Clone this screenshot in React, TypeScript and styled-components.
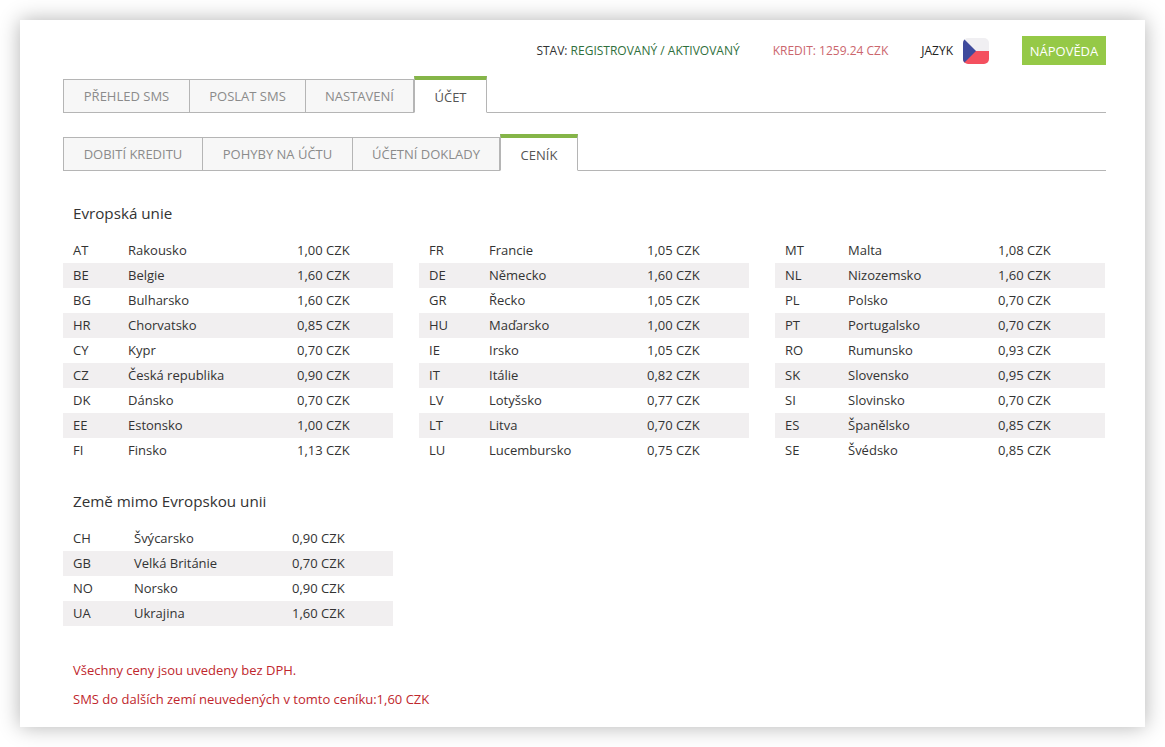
import React, { FunctionComponent } from 'react';
import styled, { createGlobalStyle } from 'styled-components';

const GlobalStyle = createGlobalStyle`
    html, body {
        margin: 0;
        padding: 0;
        background: #fff;
    }

    body {
        font-family: "Open Sans", "Liberation Sans", sans-serif;
        font-size: 13px;
        color: #333;
    }
`;

const Page = styled.div`
    padding: 20px 20px 20px;
    width: 1125px;
    box-sizing: content-box;
`;

const Card = styled.div`
    height: 707px;
    box-sizing: border-box;
    padding: 16px 39px 0 43px;
    background: #fff;
    box-shadow: 0 0 20px rgba(0, 0, 0, 0.3);
`;

const TopBar = styled.div`
    display: flex;
    justify-content: flex-end;
    align-items: center;
    height: 29px;
    font-size: 12px;
`;

const Status = styled.span`
    color: #333;
    margin-right: 33px;
`;

const Green = styled.span`
    color: #2f6f3c;
`;

const Credit = styled.span`
    color: #cb666d;
    margin-right: 33px;
`;

const Lang = styled.span`
    color: #222;
    margin-right: 10px;
`;

const Flag = styled.svg`
    display: block;
    width: 26px;
    height: 26px;
    margin-right: 33px;
`;

const HelpButton = styled.a`
    display: flex;
    align-items: center;
    justify-content: center;
    width: 84px;
    height: 29px;
    background: #95c947;
    color: #fff;
    font-size: 13px;
`;

const TabBar = styled.div<{ $top: number }>`
    display: flex;
    align-items: flex-end;
    height: 37px;
    margin-top: ${p => p.$top}px;
    border-bottom: 1px solid #b5b5b5;
    box-sizing: content-box;
`;

const Tab = styled.div<{ $active?: boolean; $width: number }>`
    display: flex;
    align-items: center;
    justify-content: center;
    box-sizing: border-box;
    width: ${p => p.$width}px;
    margin-bottom: -1px;
    padding-top: ${p => (p.$active ? 1 : 0)}px;
    font-size: 13px;
    height: ${p => (p.$active ? 37 : 34)}px;
    color: ${p => (p.$active ? '#555' : '#8b8b8b')};
    background: ${p => (p.$active ? '#fff' : '#f7f7f7')};
    border: 1px solid #b5b5b5;
    border-left-width: ${p => (p.$active ? 1 : 0)}px;
    border-bottom-color: ${p => (p.$active ? '#fff' : '#b5b5b5')};
    border-top: ${p => (p.$active ? '4px solid #85b548' : '1px solid #b5b5b5')};

    &:first-child {
        border-left-width: 1px;
    }
`;

const Heading = styled.h2<{ $top: number }>`
    margin: ${p => p.$top}px 0 0 10px;
    height: 24px;
    font-size: 15.2px;
    line-height: 22px;
    font-weight: 400;
    color: #333;
`;

const Columns = styled.div`
    display: grid;
    grid-template-columns: 330px 330px 330px;
    column-gap: 26px;
    margin-top: 12px;
`;

const Table = styled.div`
    width: 330px;
`;

const PriceRow = styled.div<{ $code: number; $name: number }>`
    display: grid;
    grid-template-columns: ${p => p.$code}px ${p => p.$name}px 1fr;
    box-sizing: border-box;
    height: 25px;
    padding: 0 0 2px 10px;
    align-items: center;
    font-size: 13px;
    color: #333;

    &:nth-child(even) {
        background: #f1eff0;
    }
`;

const Notes = styled.div`
    margin: 30px 0 0 10px;
    color: #c0272d;
    font-size: 13px;
    line-height: 29px;
`;

type Price = [string, string, string];

const eu: { code: number; name: number; rows: Price[] }[] = [
    {
        code: 55,
        name: 169,
        rows: [
            ['AT', 'Rakousko', '1,00 CZK'],
            ['BE', 'Belgie', '1,60 CZK'],
            ['BG', 'Bulharsko', '1,60 CZK'],
            ['HR', 'Chorvatsko', '0,85 CZK'],
            ['CY', 'Kypr', '0,70 CZK'],
            ['CZ', 'Česká republika', '0,90 CZK'],
            ['DK', 'Dánsko', '0,70 CZK'],
            ['EE', 'Estonsko', '1,00 CZK'],
            ['FI', 'Finsko', '1,13 CZK'],
        ],
    },
    {
        code: 60,
        name: 158,
        rows: [
            ['FR', 'Francie', '1,05 CZK'],
            ['DE', 'Německo', '1,60 CZK'],
            ['GR', 'Řecko', '1,05 CZK'],
            ['HU', 'Maďarsko', '1,00 CZK'],
            ['IE', 'Irsko', '1,05 CZK'],
            ['IT', 'Itálie', '0,82 CZK'],
            ['LV', 'Lotyšsko', '0,77 CZK'],
            ['LT', 'Litva', '0,70 CZK'],
            ['LU', 'Lucembursko', '0,75 CZK'],
        ],
    },
    {
        code: 63,
        name: 150,
        rows: [
            ['MT', 'Malta', '1,08 CZK'],
            ['NL', 'Nizozemsko', '1,60 CZK'],
            ['PL', 'Polsko', '0,70 CZK'],
            ['PT', 'Portugalsko', '0,70 CZK'],
            ['RO', 'Rumunsko', '0,93 CZK'],
            ['SK', 'Slovensko', '0,95 CZK'],
            ['SI', 'Slovinsko', '0,70 CZK'],
            ['ES', 'Španělsko', '0,85 CZK'],
            ['SE', 'Švédsko', '0,85 CZK'],
        ],
    },
];

const other: Price[] = [
    ['CH', 'Švýcarsko', '0,90 CZK'],
    ['GB', 'Velká Británie', '0,70 CZK'],
    ['NO', 'Norsko', '0,90 CZK'],
    ['UA', 'Ukrajina', '1,60 CZK'],
];

const PriceTable: FunctionComponent<{ code: number; name: number; rows: Price[] }> = ({ code, name, rows }) =>
    <Table>
        {rows.map(row =>
            <PriceRow key={row[0]} $code={code} $name={name}>
                <span>{row[0]}</span>
                <span>{row[1]}</span>
                <span>{row[2]}</span>
            </PriceRow>
        )}
    </Table>;

const App: FunctionComponent = () =>
    <Page>
        <GlobalStyle />
        <Card>
            <TopBar>
                <Status>STAV: <Green>REGISTROVANÝ / AKTIVOVANÝ</Green></Status>
                <Credit>KREDIT: 1259.24 CZK</Credit>
                <Lang>JAZYK</Lang>
                <Flag viewBox="0 0 26 26">
                    <defs>
                        <clipPath id="flag-corners">
                            <rect width="26" height="26" rx="5" />
                        </clipPath>
                    </defs>
                    <g clipPath="url(#flag-corners)">
                        <rect width="26" height="13" fill="#f0eff2" />
                        <rect y="13" width="26" height="13" fill="#f4505f" />
                        <path d="M0 0 L13 13 L0 26 Z" fill="#3f4a9c" />
                    </g>
                </Flag>
                <HelpButton>NÁPOVĚDA</HelpButton>
            </TopBar>

            <TabBar $top={10}>
                <Tab $width={127}>PŘEHLED SMS</Tab>
                <Tab $width={116}>POSLAT SMS</Tab>
                <Tab $width={108}>NASTAVENÍ</Tab>
                <Tab $active $width={73}>ÚČET</Tab>
            </TabBar>

            <TabBar $top={20}>
                <Tab $width={140}>DOBITÍ KREDITU</Tab>
                <Tab $width={150}>POHYBY NA ÚČTU</Tab>
                <Tab $width={147}>ÚČETNÍ DOKLADY</Tab>
                <Tab $active $width={78}>CENÍK</Tab>
            </TabBar>

            <Heading $top={31}>Evropská unie</Heading>
            <Columns>
                {eu.map(col =>
                    <PriceTable key={col.rows[0][0]} code={col.code} name={col.name} rows={col.rows} />
                )}
            </Columns>

            <Heading $top={27}>Země mimo Evropskou unii</Heading>
            <Columns>
                <PriceTable code={61} name={158} rows={other} />
            </Columns>

            <Notes>
                <div>Všechny ceny jsou uvedeny bez DPH.</div>
                <div>SMS do dalších zemí neuvedených v tomto ceníku:1,60 CZK</div>
            </Notes>
        </Card>
    </Page>;

export default App;
